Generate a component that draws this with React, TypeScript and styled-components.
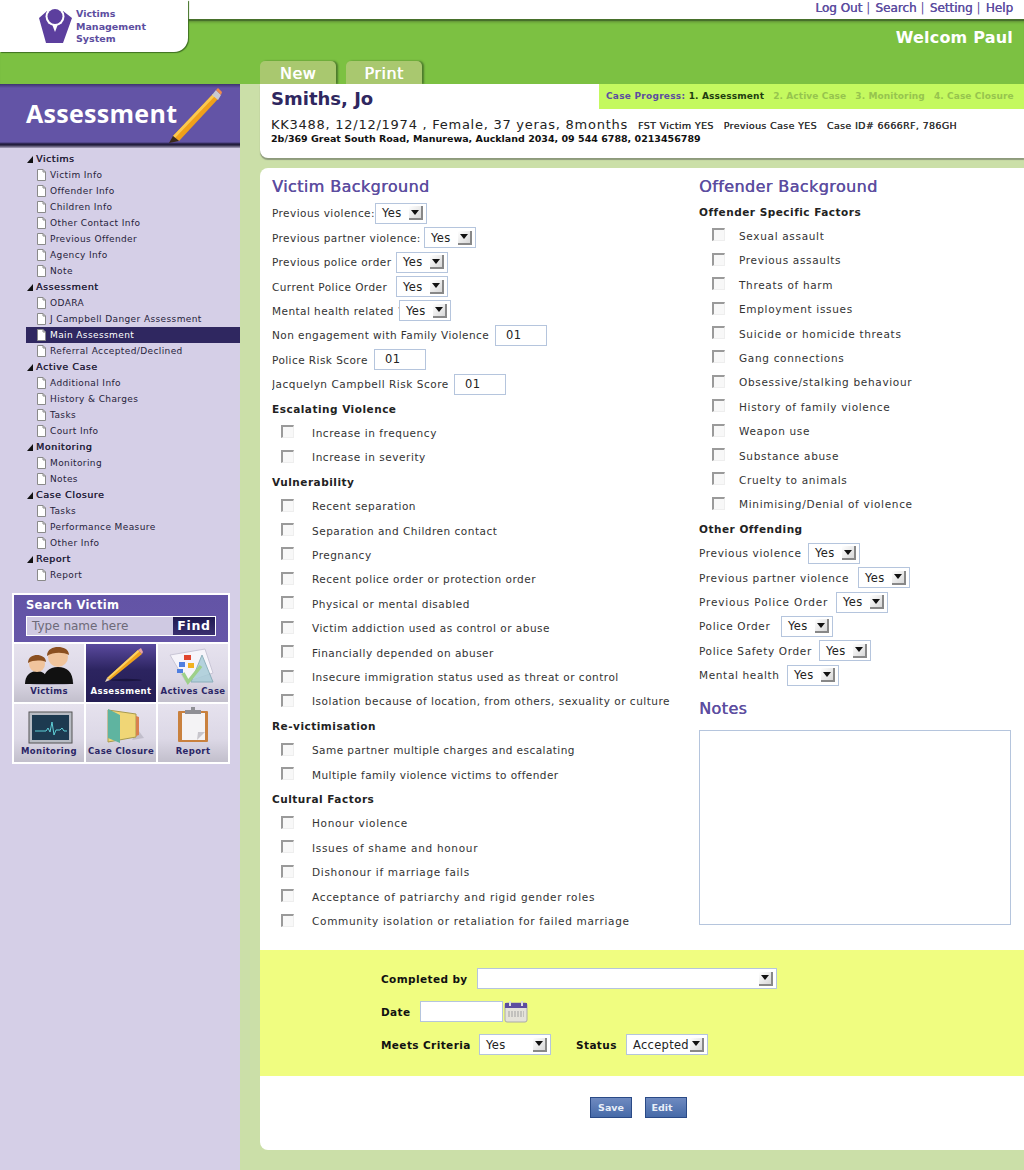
import React from "react";
import styled, { createGlobalStyle } from "styled-components";

const Global = createGlobalStyle`
  html, body { margin: 0; padding: 0; background: #cbdfa8; }
  body { font-family: "DejaVu Sans", Verdana, sans-serif; font-size: 11px; color: #222; }
  * { box-sizing: border-box; }
`;

const Page = styled.div`position: relative; width: 1024px; height: 1170px; overflow: hidden; background: #cbdfa8;`;
const TopBar = styled.div`
  height: 19px; background: #fff; display: flex; justify-content: flex-end; align-items: flex-start;
  padding: 1px 11px 0 0; font-size: 12px; color: #5c4da0; line-height: 15px; text-shadow: .4px 0 #5c4da0;
`;
const TopLink = styled.a`color: #5c4da0; text-decoration: none;`;
const Sep = styled.span`margin: 0 5px 0 4px; color: #5c4da0; text-shadow: none;`;
const Logo = styled.div`
  position: absolute; left: 0; top: 0; width: 188px; height: 52px; background: #fff; border-radius: 0 0 14px 0;
  box-shadow: 1px 1px 1px #3f6f22; display: flex; align-items: flex-start; padding: 6px 0 0 39px; gap: 4px; z-index: 2;
`;
const LogoText = styled.div`font-weight: 700; font-size: 9.5px; line-height: 12.5px; color: #5c4da0; margin-top: 2px;`;
const Band = styled.div`
  height: 65px; background: #7cc142; border-top: 2px solid #47702b; position: relative;
  box-shadow: inset 0 3px 3px -2px #5c8a35;
  display: flex; flex-direction: column; padding-left: 260px;
`;
const Welcome = styled.div`
  color: #fff; font-weight: 700; font-size: 16px; line-height: 20px; text-align: right; padding: 7px 11px 0 0; letter-spacing: .2px;
`;
const Tabs = styled.div`display: flex; gap: 10px; margin-top: auto;`;
const Tab = styled.div`
  width: 76px; height: 23px; background: #a9c86f; border-radius: 5px 5px 0 0; color: #fff; font-size: 16px; line-height: 25px; text-align: center;
  box-shadow: 2px 0 2px #4c7a2c; letter-spacing: .5px; text-shadow: .4px 0 #fff;
`;
const Body = styled.div`display: grid; grid-template-columns: 240px 1fr; height: 1086px;`;
const Side = styled.aside`background: #d5cfe7; display: flex; flex-direction: column;`;
const SideHead = styled.div`
  height: 64px; background: linear-gradient(#3d3470 0, #6354a6 4px, #6354a6 58px, #1f1a3c 60px, #25203f 61px, #aaa4bf 64px);
  color: #fff; font-weight: 700; font-size: 25px; display: flex; align-items: center; padding: 0 0 6px 26px; position: relative;
  font-family: "Open Sans", "DejaVu Sans", sans-serif; letter-spacing: .3px;
`;
const HeadPencil = styled.svg`position: absolute; left: 167px; top: 3px;`;
const Tree = styled.ul`list-style: none; margin: 0; padding: 3px 0 0 26px;`;
const Row = styled.li<{ $sel?: boolean; $group?: boolean }>`
  height: 16px; line-height: 16px; display: flex; align-items: center;
  font-size: ${p => (p.$group ? "9.5px" : "9px")}; letter-spacing: ${p => (p.$group ? ".55px" : ".39px")};
  color: ${p => (p.$sel ? "#fff" : "#26223a")}; background: ${p => (p.$sel ? "#2f2760" : "transparent")};
  padding-left: ${p => (p.$group ? "1px" : "11px")}; gap: ${p => (p.$group ? "3px" : "4px")};
  text-shadow: ${p => (p.$group ? ".3px 0 #26223a" : "none")};
`;
const Tri = styled.span`
  width: 0; height: 0; border-style: solid; border-width: 0 0 7px 6px; border-color: transparent transparent #111 transparent;
`;
const SearchBox = styled.div`
  margin: 10px 0 0 12px; width: 218px; height: 171px; border: 2px solid #fff; background: #fff; display: flex; flex-direction: column; gap: 2px;
`;
const SearchHead = styled.div`background: linear-gradient(#6354a6, #6656a8); height: 47px; padding: 3px 12px; color: #fff;`;
const SearchTitle = styled.div`font-weight: 700; font-size: 11.5px; line-height: 15px; letter-spacing: .3px;`;
const SearchInput = styled.div`
  margin-top: 3px; height: 20px; border: 1px solid #fff; background: #cfc9e2; display: flex; justify-content: space-between; color: #6d6a78; font-size: 12px; line-height: 18px; padding-left: 5px;
`;
const Find = styled.span`width: 42px; background: linear-gradient(#1f1950, #3a3070); color: #fff; font-weight: 700; text-align: center; font-size: 12.5px; letter-spacing: .7px;`;
const TileGrid = styled.div`display: grid; grid-template-columns: repeat(3, 70px); grid-auto-rows: 58px; gap: 2px;`;
const Tile = styled.div<{ $on?: boolean }>`
  background: ${p => (p.$on ? "linear-gradient(#5a4a9e, #2c2460 45%, #251e55)" : "linear-gradient(#e6e2ee, #dcd8e6 60%, #c2bfcc)")};
  color: ${p => (p.$on ? "#fff" : "#2b2666")}; font-weight: 700; font-size: 8.5px; letter-spacing: .35px; display: flex; flex-direction: column; align-items: center; justify-content: flex-end; padding-bottom: 6px; line-height: 10px; white-space: nowrap; position: relative;
`;
const TileArt = styled.svg`position: absolute; left: 0; top: 0;`;
const TileLabel = styled.span`position: relative;`;

const Main = styled.main`padding-left: 20px; display: flex; flex-direction: column;`;
const Patient = styled.section`
  height: 74px; background: #fff; border-radius: 0 0 0 8px; box-shadow: 0 2px 1px #8d9a7c; padding: 1px 0 0 11px; position: relative;
`;
const Progress = styled.div`
  position: absolute; right: 0; top: 0; width: 425px; height: 25px; background: #c4f95f; font-size: 9px; letter-spacing: .1px; line-height: 24px; padding-left: 7px; font-weight: 700; display: flex; gap: 9px; color: #96c44e; white-space: nowrap;
`;
const ProgLabel = styled.span`color: #5c4da0; letter-spacing: .25px;`;
const ProgNow = styled.span`color: #1f3d10; letter-spacing: .15px;`;
const Name = styled.h1`margin: 0; font-size: 18px; font-weight: 700; color: #2f2760; line-height: 28px;`;
const Info = styled.div`font-size: 13px; line-height: 18px; margin-top: 3px; color: #222; letter-spacing: .74px; white-space: nowrap;`;
const InfoSmall = styled.span`font-size: 9.5px; margin-left: 10px; color: #333; letter-spacing: .35px; text-shadow: .2px 0 #333;`;
const Address = styled.div`font-size: 9.5px; font-weight: 700; line-height: 13px; margin-top: -3px; color: #111;`;

const FormCard = styled.section`
  margin-top: 10px; height: 982px; background: #fff; border-radius: 8px 0 0 8px; display: flex; flex-direction: column;
`;
const Columns = styled.div`display: grid; grid-template-columns: 427px 1fr; height: 782px; padding-left: 12px;`;
const Col = styled.div`display: flex; flex-direction: column;`;
const H2 = styled.h2<{ $h: number; $top?: number }>`
  margin: 0; height: ${p => p.$h}px; padding-top: ${p => p.$top ?? 7}px; font-size: 16px; line-height: 24px; font-weight: 400; color: #5c4da0; letter-spacing: .4px; text-shadow: .4px 0 #5c4da0;
`;
const FormRow = styled.div<{ $sp?: number }>`
  height: 24.42px; display: flex; align-items: center; font-size: 10.5px; letter-spacing: ${p => p.$sp ?? 0.44}px; color: #333; white-space: nowrap;
`;
const Label = styled.span<{ $w: number }>`width: ${p => p.$w}px; overflow: hidden; flex: none;`;
const H3 = styled.div`height: 24.42px; display: flex; align-items: center; font-size: 10.5px; letter-spacing: .5px; font-weight: 700; color: #222;`;
const Check = styled.span<{ $off: number; $after: number }>`
  width: 13px; height: 13px; margin: -2px ${p => p.$after}px 0 ${p => p.$off}px; border-top: 2px solid #9a9a9a; border-left: 2px solid #9a9a9a; border-right: 1px solid #eee; border-bottom: 1px solid #eee; background: #f8f8f8;
`;
const Sel = styled.div<{ $w?: number }>`
  width: ${p => p.$w ?? 52}px; height: 21px; border: 1px solid #b5c5dd; background: #fff; display: flex; align-items: center; padding: 0 3px 0 6px; color: #222; font-size: 11.5px; font-weight: 400; letter-spacing: .3px; flex: none;
`;
const Arrow = styled.span`
  width: 14px; height: 14px; margin-left: auto; background: linear-gradient(135deg, #fff, #d8d8d8); border-right: 2px solid #888; border-bottom: 2px solid #888; display: flex; align-items: center; justify-content: center; flex: none;
  &::after { content: ""; border-style: solid; border-width: 5px 4px 0 4px; border-color: #111 transparent transparent transparent; }
`;
const Num = styled.div`width: 52px; height: 21px; border: 1px solid #b5c5dd; background: #fff; padding-left: 10px; font-size: 11.5px; line-height: 19px; color: #222; letter-spacing: .5px; flex: none;`;
const NotesBox = styled.div`width: 312px; height: 195px; border: 1px solid #b5c5dd; background: #fff; margin-top: 3px;`;
const Yellow = styled.div`
  height: 126px; background: #f0fd80; padding: 18px 0 0 121px; display: flex; flex-direction: column; gap: 12px;
`;
const YRow = styled.div`display: flex; align-items: center; font-size: 10.5px; font-weight: 700; letter-spacing: .4px; color: #111; height: 21px;`;
const YGap = styled.span<{ $w: number }>`width: ${p => p.$w}px; flex: none;`;
const YInput = styled.div`width: 83px; height: 21px; border: 1px solid #b5c5dd; background: #fff;`;
const Actions = styled.div`display: flex; justify-content: center; gap: 13px; padding: 21px 7px 0 0;`;
const Btn = styled.button<{ $pr?: number }>`
  width: 42px; height: 21px; background: linear-gradient(#6f8ac0, #466aa8); border: 1px solid #2a4a86; color: #e8eef8; font-family: inherit; font-weight: 700; font-size: 9.5px; padding: 0 ${p => p.$pr ?? 0}px 0 0;
`;

const Doc = () => (
  <svg width="9" height="12" viewBox="0 0 9 12" style={{ flex: "none" }}>
    <path d="M.5.5H6L8.5 3V11.5H.5Z" fill="#fff" stroke="#8a8a8a" />
    <path d="M6 .5V3H8.5" fill="none" stroke="#8a8a8a" />
  </svg>
);

const tree: [string, string[]][] = [
  ["Victims", ["Victim Info", "Offender Info", "Children Info", "Other Contact Info", "Previous Offender", "Agency Info", "Note"]],
  ["Assessment", ["ODARA", "J Campbell Danger Assessment", "Main Assessment", "Referral Accepted/Declined"]],
  ["Active Case", ["Additional Info", "History & Charges", "Tasks", "Court Info"]],
  ["Monitoring", ["Monitoring", "Notes"]],
  ["Case Closure", ["Tasks", "Performance Measure", "Other Info"]],
  ["Report", ["Report"]],
];

const Select = ({ v = "Yes", w }: { v?: string; w?: number }) => (
  <Sel $w={w}>{v}<Arrow /></Sel>
);

const Checks = ({ items, off, after, sp }: { items: string[]; off: number; after: number; sp?: number }) => (
  <>
    {items.map(t => (
      <FormRow key={t} $sp={sp}><Check $off={off} $after={after} />{t}</FormRow>
    ))}
  </>
);

const HeadArt = () => (
  <HeadPencil width={56} height={58} viewBox="0 0 56 58">
    <path d="M6 49 L46 7 L51 12 L12 54 Z" fill="#f0a01a" />
    <path d="M6 49 L46 7 L48 9 L8 51 Z" fill="#fbc94f" />
    <path d="M6 49 L2 56 L12 54 Z" fill="#3b2a1a" />
    <path d="M45 8 L49 3 L54 8 L51 13 Z" fill="#c9c9cf" />
    <path d="M49 3 L51 1 L55 5 L54 8 Z" fill="#f08a4b" />
  </HeadPencil>
);

const People = () => (
  <TileArt width="70" height="58" viewBox="0 0 70 58">
    <ellipse cx="36" cy="39" rx="24" ry="2" fill="#8b86a0" opacity=".6" />
    <path d="M11 40c0-8 5-13 12-13s11 5 11 13Z" fill="#111" />
    <circle cx="23" cy="20" r="8" fill="#f0c49c" />
    <path d="M14 19c0-6 5-8 9-8s9 2 9 7c-5-2-13-2-18 1Z" fill="#8a4f20" />
    <path d="M29 40c0-12 6-17 15-17s15 5 15 17Z" fill="#111" />
    <circle cx="44" cy="13" r="10" fill="#f0c49c" />
    <path d="M33 12c0-7 6-9 11-9s11 2 11 8c-6-3-16-3-22 1Z" fill="#8a4f20" />
  </TileArt>
);
const BigPencil = () => (
  <TileArt width="70" height="58" viewBox="0 0 70 58">
    <ellipse cx="40" cy="36" rx="16" ry="1.2" fill="#1a1540" />
    <path d="M21 34 L52 6 L56 10 L24 36 Z" fill="#f0a41c" />
    <path d="M21 34 L52 6 L53.5 7.5 L22.5 35 Z" fill="#fbd163" />
    <path d="M21 34 L19 38 L24 36 Z" fill="#e8d3b5" />
    <path d="M52 6 L55 4 L57 8 L56 10 Z" fill="#e7a3a3" />
  </TileArt>
);
const Shapes = () => (
  <TileArt width="70" height="58" viewBox="0 0 70 58">
    <path d="M12 11 L47 5 L55 29 L28 38 Z" fill="#f6f4fa" stroke="#c9c6d6" />
    <rect x="26" y="11" width="7" height="5" fill="#e0452e" />
    <rect x="21" y="18" width="6" height="5" fill="#4f7fe0" />
    <rect x="30" y="19" width="6" height="5" fill="#f2b21f" />
    <rect x="19" y="25" width="6" height="4" fill="#4f7fe0" />
    <path d="M44 11 L55 38 L33 38 Z" fill="#a9cdd8" opacity=".85" stroke="#7fa8b4" />
    <path d="M25 29 L30 38 L43 22" fill="none" stroke="#9ed08a" strokeWidth="3.5" />
  </TileArt>
);
const Monitor = () => (
  <TileArt width="70" height="58" viewBox="0 0 70 58">
    <rect x="15" y="8" width="43" height="31" fill="#b8bcc4" stroke="#555" />
    <rect x="18" y="11" width="37" height="25" fill="#1d3a50" />
    <path d="M21 27H32L34 24L36 28L38 18L40 31L42 26H46L48 24L50 27H53" fill="none" stroke="#5fd0d8" strokeWidth="1" />
  </TileArt>
);
const Folder = () => (
  <TileArt width="70" height="58" viewBox="0 0 70 58">
    <path d="M46 36 L58 34 L52 26 Z" fill="#b5b2bf" opacity=".7" />
    <path d="M22 6 L50 10 V33 L22 38 Z" fill="#f0d676" stroke="#a89a4e" />
    <path d="M50 12 L53 13 V31 L50 32 Z" fill="#d87f4f" />
    <path d="M22 5 L34 11 V39 L22 34 Z" fill="#5fb4a0" />
  </TileArt>
);
const Clip = () => (
  <TileArt width="70" height="58" viewBox="0 0 70 58">
    <rect x="20" y="7" width="30" height="31" rx="1" fill="#c9813e" />
    <rect x="24" y="9" width="23" height="27" fill="#f4f3f5" />
    <path d="M39 36 L47 28 L40 28 Z" fill="#c8c6cc" />
    <rect x="27" y="6" width="16" height="4" fill="#8f8f95" />
    <rect x="33" y="3" width="4" height="4" fill="#8f8f95" />
  </TileArt>
);

export default function App() {
  return (
    <Page>
      <Global />
      <Logo>
        <svg width="33" height="38" viewBox="0 0 33 38">
          <path d="M0 12 L8 5 L16 26 L24 5 L33 12 L24 37 H7 Z" fill="#5c3f9e" />
          <circle cx="16" cy="10.5" r="9.5" fill="#fff" />
          <circle cx="16" cy="10.5" r="7.5" fill="#5c3f9e" />
        </svg>
        <LogoText>Victims<br />Management<br />System</LogoText>
      </Logo>
      <TopBar>
        <TopLink>Log Out</TopLink><Sep>|</Sep><TopLink>Search</TopLink><Sep>|</Sep><TopLink>Setting</TopLink><Sep>|</Sep><TopLink>Help</TopLink>
      </TopBar>
      <Band>
        <Welcome>Welcom Paul</Welcome>
        <Tabs><Tab>New</Tab><Tab>Print</Tab></Tabs>
      </Band>
      <Body>
        <Side>
          <SideHead>Assessment<HeadArt /></SideHead>
          <Tree>
            {tree.map(([g, items]) => (
              <React.Fragment key={g}>
                <Row $group><Tri />{g}</Row>
                {items.map(i => (
                  <Row key={g + i} $sel={i === "Main Assessment"}><Doc />{i}</Row>
                ))}
              </React.Fragment>
            ))}
          </Tree>
          <SearchBox>
            <SearchHead>
              <SearchTitle>Search Victim</SearchTitle>
              <SearchInput>Type name here<Find>Find</Find></SearchInput>
            </SearchHead>
            <TileGrid>
              <Tile><People /><TileLabel>Victims</TileLabel></Tile>
              <Tile $on><BigPencil /><TileLabel>Assessment</TileLabel></Tile>
              <Tile><Shapes /><TileLabel>Actives Case</TileLabel></Tile>
              <Tile><Monitor /><TileLabel>Monitoring</TileLabel></Tile>
              <Tile><Folder /><TileLabel>Case Closure</TileLabel></Tile>
              <Tile><Clip /><TileLabel>Report</TileLabel></Tile>
            </TileGrid>
          </SearchBox>
        </Side>
        <Main>
          <Patient>
            <Progress>
              <ProgLabel>Case Progress:&nbsp;<ProgNow>1. Assessment</ProgNow></ProgLabel>
              <span>2. Active Case</span><span>3. Monitoring</span><span>4. Case Closure</span>
            </Progress>
            <Name>Smiths, Jo</Name>
            <Info>KK3488, 12/12/1974 , Female, 37 yeras, 8months
              <InfoSmall>FST Victim YES</InfoSmall><InfoSmall>Previous Case YES</InfoSmall><InfoSmall>Case ID# 6666RF, 786GH</InfoSmall>
            </Info>
            <Address>2b/369 Great South Road, Manurewa, Auckland 2034, 09 544 6788, 0213456789</Address>
          </Patient>
          <FormCard>
            <Columns>
              <Col>
                <H2 $h={33.1}>Victim Background</H2>
                <FormRow><Label $w={103}>Previous violence:</Label><Select /></FormRow>
                <FormRow><Label $w={152}>Previous partner violence:</Label><Select /></FormRow>
                <FormRow><Label $w={124}>Previous police order</Label><Select /></FormRow>
                <FormRow><Label $w={124}>Current Police Order</Label><Select /></FormRow>
                <FormRow><Label $w={127}>Mental health related ?</Label><Select /></FormRow>
                <FormRow><Label $w={223}>Non engagement with Family Violence</Label><Num>01</Num></FormRow>
                <FormRow><Label $w={102}>Police Risk Score</Label><Num>01</Num></FormRow>
                <FormRow $sp={0.52}><Label $w={182}>Jacquelyn Campbell Risk Score</Label><Num>01</Num></FormRow>
                <H3>Escalating Violence</H3>
                <Checks off={9} after={18} sp={0.55} items={["Increase in frequency", "Increase in severity"]} />
                <H3>Vulnerability</H3>
                <Checks off={9} after={18} sp={0.5} items={["Recent separation", "Separation and Children contact", "Pregnancy", "Recent police order or protection order", "Physical or mental disabled", "Victim addiction used as control or abuse", "Financially depended on abuser", "Insecure immigration status used as threat or control", "Isolation because of location, from others, sexuality or culture"]} />
                <H3>Re-victimisation</H3>
                <Checks off={9} after={18} items={["Same partner multiple charges and escalating", "Multiple family violence victims to offender"]} />
                <H3>Cultural Factors</H3>
                <Checks off={9} after={18} sp={0.69} items={["Honour violence", "Issues of shame and honour", "Dishonour if marriage fails", "Acceptance of patriarchy and rigid gender roles", "Community isolation or retaliation for failed marriage"]} />
              </Col>
              <Col>
                <H2 $h={31.3}>Offender Background</H2>
                <H3>Offender Specific Factors</H3>
                <Checks off={13} after={14} sp={0.68} items={["Sexual assault", "Previous assaults", "Threats of harm", "Employment issues", "Suicide or homicide threats", "Gang connections", "Obsessive/stalking behaviour", "History of family violence", "Weapon use", "Substance abuse", "Cruelty to animals", "Minimising/Denial of violence"]} />
                <H3>Other Offending</H3>
                <FormRow $sp={0.65}><Label $w={109}>Previous violence</Label><Select /></FormRow>
                <FormRow $sp={0.65}><Label $w={159}>Previous partner violence</Label><Select /></FormRow>
                <FormRow $sp={0.85}><Label $w={137}>Previous Police Order</Label><Select /></FormRow>
                <FormRow $sp={0.65}><Label $w={82}>Police Order</Label><Select /></FormRow>
                <FormRow $sp={0.65}><Label $w={120}>Police Safety Order</Label><Select /></FormRow>
                <FormRow $sp={0.65}><Label $w={88}>Mental health</Label><Select /></FormRow>
                <H2 $h={40} $top={10}>Notes</H2>
                <NotesBox />
              </Col>
            </Columns>
            <Yellow>
              <YRow><Label $w={96}>Completed by</Label><Select v="" w={300} /></YRow>
              <YRow><Label $w={39}>Date</Label><YInput />
                <svg width="24" height="24" viewBox="0 0 24 24" style={{ marginLeft: 1 }}>
                  <rect x="1" y="3" width="22" height="19" rx="2" fill="#e4e2da" stroke="#aaa" />
                  <rect x="1" y="3" width="22" height="5" fill="#5c4da0" />
                  <rect x="5" y="1" width="2" height="5" fill="#ddd" /><rect x="17" y="1" width="2" height="5" fill="#ddd" />
                  <path d="M4 12h16M4 14h16M4 16h16" stroke="#a0a0a0" strokeWidth="1.2" strokeDasharray="2 1" />
                </svg>
              </YRow>
              <YRow><Label $w={98}>Meets Criteria</Label><Select w={72} /><YGap $w={25} /><Label $w={50}>Status</Label><Select v="Accepted" w={82} /></YRow>
            </Yellow>
            <Actions><Btn>Save</Btn><Btn $pr={8}>Edit</Btn></Actions>
          </FormCard>
        </Main>
      </Body>
    </Page>
  );
}
